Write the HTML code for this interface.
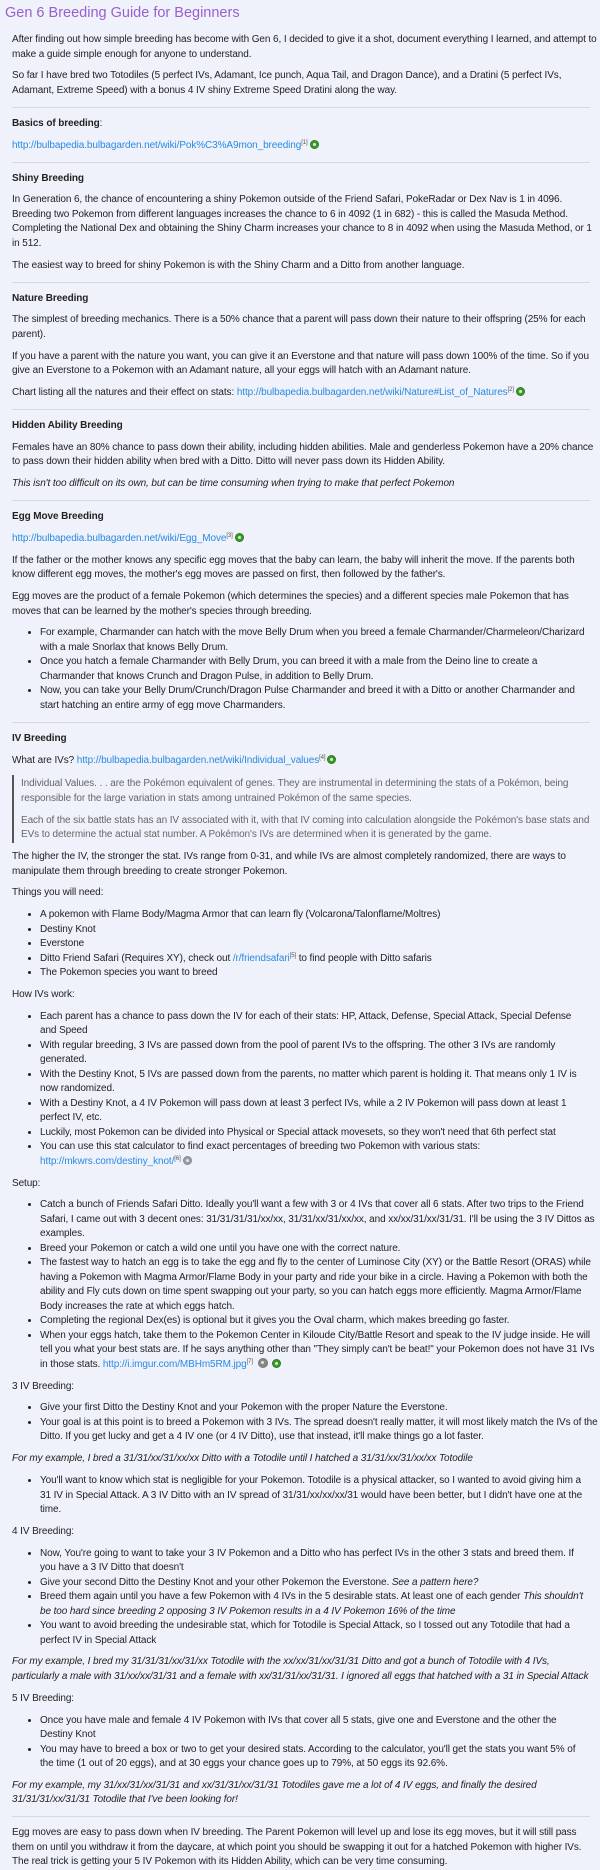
<!DOCTYPE html>
<html><head><meta charset="utf-8"><style>
html,body{margin:0;padding:0;background:#eff2fb;}
body{width:600px;height:1866px;overflow:hidden;font-family:"Liberation Sans",sans-serif;font-size:10px;letter-spacing:-0.1px;line-height:14.5px;color:#222;}
h1{font-size:14.5px;font-weight:normal;color:#9a5fce;margin:0;padding:4px 0 0 5px;line-height:18px;letter-spacing:0;}
.c{padding:11px 0 0 12px;width:586px;}
p{margin:0 0 7.3px 0;}
hr{border:0;border-top:1px solid #d8d8d8;margin:8.5px 0 9px 0;width:578px;}
a{color:#2a8ae2;text-decoration:none;}
sup{font-size:6px;line-height:0;vertical-align:4px;color:#555;}
.g{display:inline-block;width:7px;height:7px;border-radius:50%;background:#3c9a2c;border:1px solid #2d7a20;vertical-align:-1px;margin-left:2px;position:relative;}
.g::after{content:"";position:absolute;left:2px;top:2px;width:3px;height:3px;border-radius:50%;background:#d6f0c8;}
ul{margin:0 0 7.3px 0;padding-left:28px;}
li{margin:0;}
blockquote{margin:0 0 7.3px 0;border-left:2px solid #555;padding:2px 0 0 7px;color:#666;width:570px;}
blockquote p:last-child{margin-bottom:4px}
b{font-weight:bold;}
</style></head><body>
<h1>Gen 6 Breeding Guide for Beginners</h1>
<div class="c">
<p style="width:600px">After finding out how simple breeding has become with Gen 6, I decided to give it a shot, document everything I learned, and attempt to make a guide simple enough for anyone to understand.</p>
<p>So far I have bred two Totodiles (5 perfect IVs, Adamant, Ice punch, Aqua Tail, and Dragon Dance), and a Dratini (5 perfect IVs, Adamant, Extreme Speed) with a bonus 4 IV shiny Extreme Speed Dratini along the way.</p>
<hr>
<p><b>Basics of breeding</b>:</p>
<p><a>http://bulbapedia.bulbagarden.net/wiki/Pok%C3%A9mon_breeding</a><sup>[1]</sup><span class="g"></span></p>
<hr>
<p><b>Shiny Breeding</b></p>
<p>In Generation 6, the chance of encountering a shiny Pokemon outside of the Friend Safari, PokeRadar or Dex Nav is 1 in 4096. Breeding two Pokemon from different languages increases the chance to 6 in 4092 (1 in 682) - this is called the Masuda Method. Completing the National Dex and obtaining the Shiny Charm increases your chance to 8 in 4092 when using the Masuda Method, or 1 in 512.</p>
<p>The easiest way to breed for shiny Pokemon is with the Shiny Charm and a Ditto from another language.</p>
<hr>
<p><b>Nature Breeding</b></p>
<p style="width:600px">The simplest of breeding mechanics. There is a 50% chance that a parent will pass down their nature to their offspring (25% for each parent).</p>
<p style="width:586px">If you have a parent with the nature you want, you can give it an Everstone and that nature will pass down 100% of the time. So if you give an Everstone to a Pokemon with an Adamant nature, all your eggs will hatch with an Adamant nature.</p>
<p>Chart listing all the natures and their effect on stats: <a>http://bulbapedia.bulbagarden.net/wiki/Nature#List_of_Natures</a><sup>[2]</sup><span class="g"></span></p>
<hr>
<p><b>Hidden Ability Breeding</b></p>
<p>Females have an 80% chance to pass down their ability, including hidden abilities. Male and genderless Pokemon have a 20% chance to pass down their hidden ability when bred with a Ditto. Ditto will never pass down its Hidden Ability.</p>
<p><i>This isn't too difficult on its own, but can be time consuming when trying to make that perfect Pokemon</i></p>
<hr>
<p><b>Egg Move Breeding</b></p>
<p><a>http://bulbapedia.bulbagarden.net/wiki/Egg_Move</a><sup>[3]</sup><span class="g"></span></p>
<p style="width:578px">If the father or the mother knows any specific egg moves that the baby can learn, the baby will inherit the move. If the parents both know different egg moves, the mother's egg moves are passed on first, then followed by the father's.</p>
<p style="width:578px">Egg moves are the product of a female Pokemon (which determines the species) and a different species male Pokemon that has moves that can be learned by the mother's species through breeding.</p>
<ul style="width:550px">
<li>For example, Charmander can hatch with the move Belly Drum when you breed a female Charmander/Charmeleon/Charizard with a male Snorlax that knows Belly Drum.</li>
<li>Once you hatch a female Charmander with Belly Drum, you can breed it with a male from the Deino line to create a Charmander that knows Crunch and Dragon Pulse, in addition to Belly Drum.</li>
<li>Now, you can take your Belly Drum/Crunch/Dragon Pulse Charmander and breed it with a Ditto or another Charmander and start hatching an entire army of egg move Charmanders.</li>
</ul>
<hr>
<p><b>IV Breeding</b></p>
<p>What are IVs? <a>http://bulbapedia.bulbagarden.net/wiki/Individual_values</a><sup>[4]</sup><span class="g"></span></p>
<blockquote><p>Individual Values. . . are the Pokémon equivalent of genes. They are instrumental in determining the stats of a Pokémon, being responsible for the large variation in stats among untrained Pokémon of the same species.</p>
<p>Each of the six battle stats has an IV associated with it, with that IV coming into calculation alongside the Pokémon's base stats and EVs to determine the actual stat number. A Pokémon's IVs are determined when it is generated by the game.</p></blockquote>
<p>The higher the IV, the stronger the stat. IVs range from 0-31, and while IVs are almost completely randomized, there are ways to manipulate them through breeding to create stronger Pokemon.</p>
<p>Things you will need:</p>
<ul>
<li>A pokemon with Flame Body/Magma Armor that can learn fly (Volcarona/Talonflame/Moltres)</li>
<li>Destiny Knot</li>
<li>Everstone</li>
<li>Ditto Friend Safari (Requires XY), check out <a>/r/friendsafari</a><sup>[5]</sup> to find people with Ditto safaris</li>
<li>The Pokemon species you want to breed</li>
</ul>
<p>How IVs work:</p>
<ul style="width:550px">
<li>Each parent has a chance to pass down the IV for each of their stats: HP, Attack, Defense, Special Attack, Special Defense and Speed</li>
<li>With regular breeding, 3 IVs are passed down from the pool of parent IVs to the offspring. The other 3 IVs are randomly generated.</li>
<li>With the Destiny Knot, 5 IVs are passed down from the parents, no matter which parent is holding it. That means only 1 IV is now randomized.</li>
<li>With a Destiny Knot, a 4 IV Pokemon will pass down at least 3 perfect IVs, while a 2 IV Pokemon will pass down at least 1 perfect IV, etc.</li>
<li>Luckily, most Pokemon can be divided into Physical or Special attack movesets, so they won't need that 6th perfect stat</li>
<li>You can use this stat calculator to find exact percentages of breeding two Pokemon with various stats: <a>http://mkwrs.com/destiny_knot/</a><sup>[6]</sup><span class="g" style="background:#99a;border-color:#889"></span></li>
</ul>
<p>Setup:</p>
<ul>
<li>Catch a bunch of Friends Safari Ditto. Ideally you'll want a few with 3 or 4 IVs that cover all 6 stats. After two trips to the Friend Safari, I came out with 3 decent ones: 31/31/31/31/xx/xx, 31/31/xx/31/xx/xx, and xx/xx/31/xx/31/31. I'll be using the 3 IV Dittos as examples.</li>
<li>Breed your Pokemon or catch a wild one until you have one with the correct nature.</li>
<li>The fastest way to hatch an egg is to take the egg and fly to the center of Luminose City (XY) or the Battle Resort (ORAS) while having a Pokemon with Magma Armor/Flame Body in your party and ride your bike in a circle. Having a Pokemon with both the ability and Fly cuts down on time spent swapping out your party, so you can hatch eggs more efficiently. Magma Armor/Flame Body increases the rate at which eggs hatch.</li>
<li>Completing the regional Dex(es) is optional but it gives you the Oval charm, which makes breeding go faster.</li>
<li>When your eggs hatch, take them to the Pokemon Center in Kiloude City/Battle Resort and speak to the IV judge inside. He will tell you what your best stats are. If he says anything other than "They simply can't be beat!" your Pokemon does not have 31 IVs in those stats. <a>http://i.imgur.com/MBHm5RM.jpg</a><sup>[7]</sup> <span class="g" style="background:#888;border-color:#777;width:8px;height:8px"></span> <span class="g"></span></li>
</ul>
<p>3 IV Breeding:</p>
<ul>
<li>Give your first Ditto the Destiny Knot and your Pokemon with the proper Nature the Everstone.</li>
<li>Your goal is at this point is to breed a Pokemon with 3 IVs. The spread doesn't really matter, it will most likely match the IVs of the Ditto. If you get lucky and get a 4 IV one (or 4 IV Ditto), use that instead, it'll make things go a lot faster.</li>
</ul>
<p><i>For my example, I bred a 31/31/xx/31/xx/xx Ditto with a Totodile until I hatched a 31/31/xx/31/xx/xx Totodile</i></p>
<ul style="width:550px">
<li>You'll want to know which stat is negligible for your Pokemon. Totodile is a physical attacker, so I wanted to avoid giving him a 31 IV in Special Attack. A 3 IV Ditto with an IV spread of 31/31/xx/xx/xx/31 would have been better, but I didn't have one at the time.</li>
</ul>
<p>4 IV Breeding:</p>
<ul style="width:550px">
<li>Now, You're going to want to take your 3 IV Pokemon and a Ditto who has perfect IVs in the other 3 stats and breed them. If you have a 3 IV Ditto that doesn't</li>
<li>Give your second Ditto the Destiny Knot and your other Pokemon the Everstone. <i>See a pattern here?</i></li>
<li>Breed them again until you have a few Pokemon with 4 IVs in the 5 desirable stats. At least one of each gender <i>This shouldn't be too hard since breeding 2 opposing 3 IV Pokemon results in a 4 IV Pokemon 16% of the time</i></li>
<li>You want to avoid breeding the undesirable stat, which for Totodile is Special Attack, so I tossed out any Totodile that had a perfect IV in Special Attack</li>
</ul>
<p style="width:578px"><i>For my example, I bred my 31/31/31/xx/31/xx Totodile with the xx/xx/31/xx/31/31 Ditto and got a bunch of Totodile with 4 IVs, particularly a male with 31/xx/xx/31/31 and a female with xx/31/31/xx/31/31. I ignored all eggs that hatched with a 31 in Special Attack</i></p>
<p>5 IV Breeding:</p>
<ul style="width:550px">
<li>Once you have male and female 4 IV Pokemon with IVs that cover all 5 stats, give one and Everstone and the other the Destiny Knot</li>
<li>You may have to breed a box or two to get your desired stats. According to the calculator, you'll get the stats you want 5% of the time (1 out of 20 eggs), and at 30 eggs your chance goes up to 79%, at 50 eggs its 92.6%.</li>
</ul>
<p style="width:578px"><i>For my example, my 31/xx/31/xx/31/31 and xx/31/31/xx/31/31 Totodiles gave me a lot of 4 IV eggs, and finally the desired 31/31/31/xx/31/31 Totodile that I've been looking for!</i></p>
<hr>
<p style="width:584px">Egg moves are easy to pass down when IV breeding. The Parent Pokemon will level up and lose its egg moves, but it will still pass them on until you withdraw it from the daycare, at which point you should be swapping it out for a hatched Pokemon with higher IVs. The real trick is getting your 5 IV Pokemon with its Hidden Ability, which can be very time consuming.</p>
</div>
</body></html>
